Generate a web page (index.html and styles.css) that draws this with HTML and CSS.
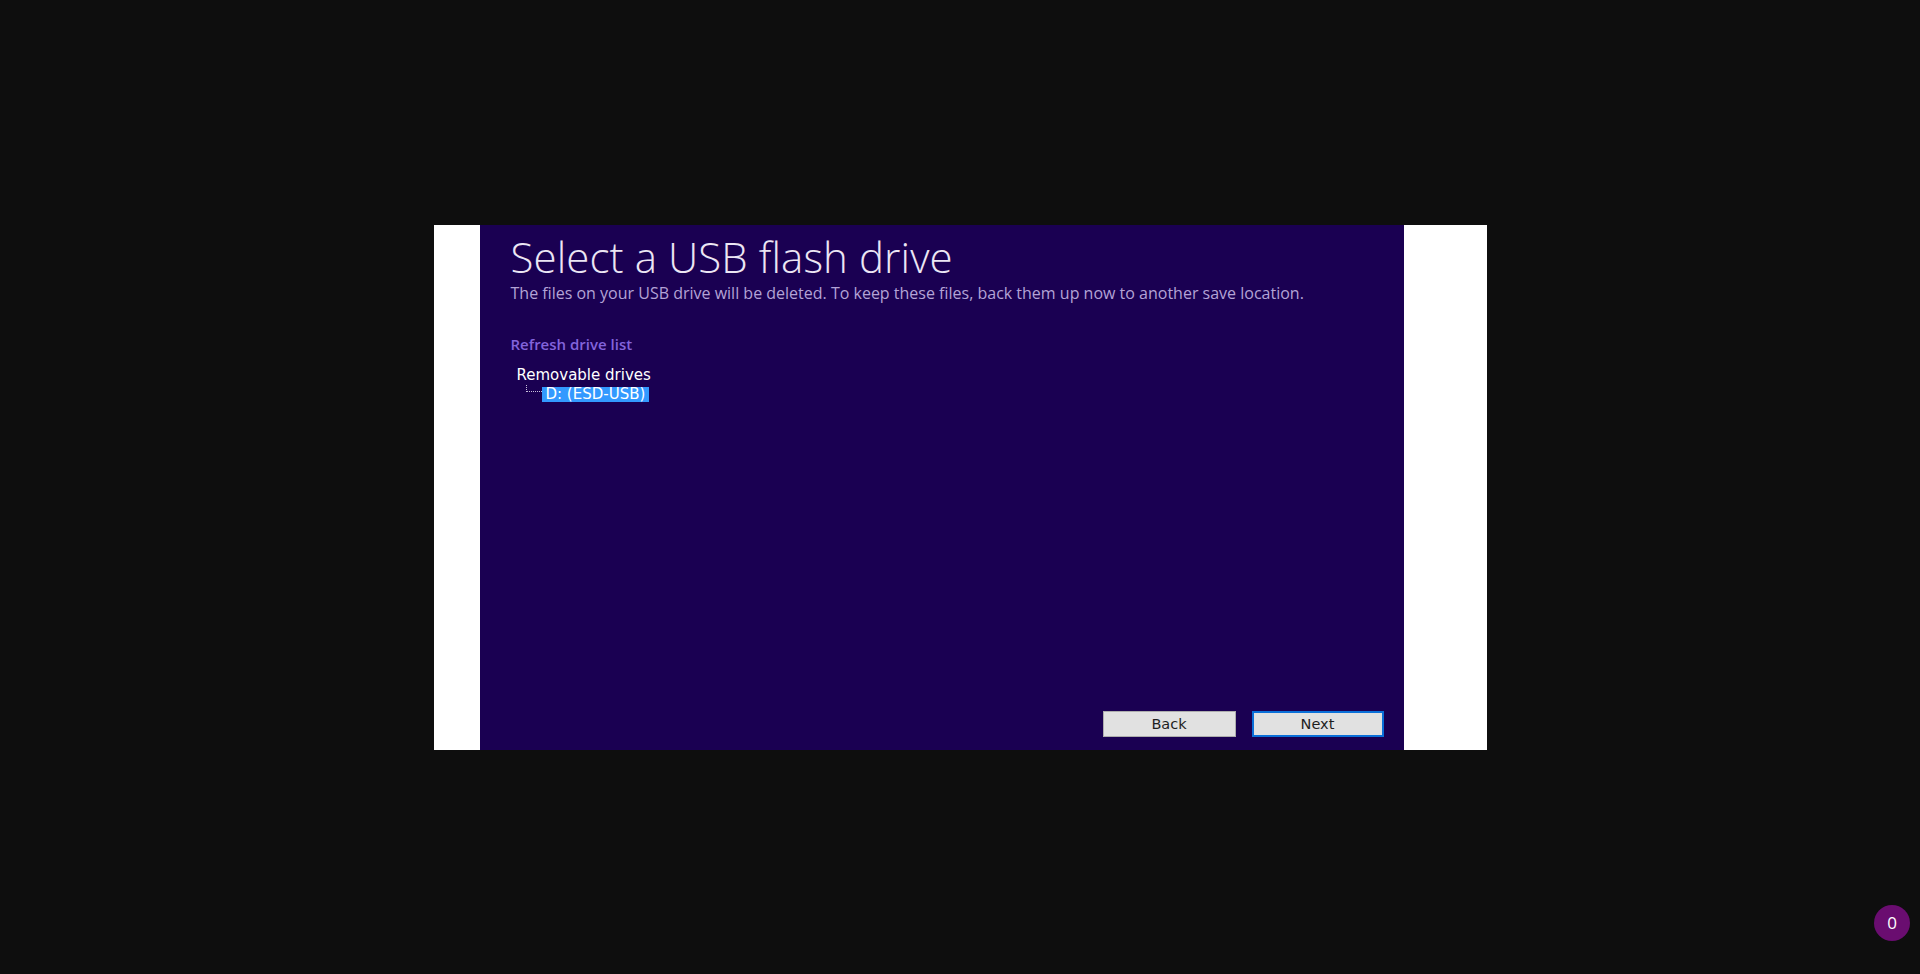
FILE: index.html
```html
<!DOCTYPE html>
<html lang="en">
<head>
<meta charset="utf-8">
<title>Select a USB flash drive</title>
<link rel="stylesheet" href="styles.css">
</head>
<body>
<div class="stage">
  <div class="frame">
    <div class="panel">
      <h1 class="title">Select a USB flash drive</h1>
      <p class="subtitle">The files on your USB drive will be deleted. To keep these files, back them up now to another save location.</p>
      <a class="refresh">Refresh drive list</a>
      <div class="tree">
        <div class="tree-root">Removable drives</div>
        <div class="tree-item">
          <span class="tree-line"></span>
          <span class="tree-label">D: (ESD-USB)</span>
        </div>
      </div>
      <div class="actions">
        <button class="btn">Back</button>
        <button class="btn btn-default">Next</button>
      </div>
    </div>
  </div>
</div>
<div class="badge">0</div>
</body>
</html>
```
FILE: styles.css
```css
html, body {
  margin: 0;
  padding: 0;
  height: 100%;
}
body {
  background: #0e0e0e;
  font-family: "Open Sans", "Noto Sans", sans-serif;
}
.stage {
  height: 100%;
  display: flex;
  align-items: center;
  justify-content: center;
}
.frame {
  width: 1053px;
  height: 525px;
  background: #ffffff;
  display: flex;
  padding-left: 46px;
  box-sizing: border-box;
}
.panel {
  width: 924px;
  height: 100%;
  background: #1a0052;
  display: flex;
  flex-direction: column;
  padding: 0 20px 13px 31px;
  box-sizing: border-box;
}
.title {
  margin: 8px 0 0 0;
  font-weight: 300;
  font-size: 42px;
  line-height: 48px;
  color: #ece6f4;
  letter-spacing: 0.1px;
}
.subtitle {
  margin: 1px 0 0 0;
  font-size: 16px;
  line-height: 22px;
  font-weight: 500;
  color: #b3a3d6;
}
.refresh {
  margin-top: 30px;
  font-size: 15px;
  line-height: 20px;
  color: #8364dc;
  font-weight: 600;
}
.tree {
  margin-top: 12px;
  padding-left: 6px;
  font-family: "DejaVu Sans", Verdana, sans-serif;
  font-size: 15px;
  color: #ffffff;
}
.tree-root {
  line-height: 18px;
}
.tree-item {
  display: flex;
  align-items: flex-start;
  padding-left: 9px;
  margin-top: 3px;
}
.tree-line {
  width: 16px;
  height: 7px;
  margin-top: -2px;
  border-left: 1px dotted #c8c0dc;
  border-bottom: 1px dotted #c8c0dc;
  box-sizing: border-box;
}
.tree-label {
  background: #3399ff;
  line-height: 15px;
  padding: 0 4px;
}
.actions {
  margin-top: auto;
  display: flex;
  justify-content: flex-end;
  gap: 16px;
}
.btn {
  width: 133px;
  height: 26px;
  background: #e1e1e1;
  border: 1px solid #adadad;
  font-family: "DejaVu Sans", Verdana, sans-serif;
  font-size: 14.5px;
  color: #1e1e1e;
  padding: 0;
}
.btn-default {
  width: 132px;
  border: 2px solid #0a6fd8;
}
.badge {
  position: fixed;
  right: 10px;
  bottom: 33px;
  width: 36px;
  height: 36px;
  border-radius: 50%;
  background: #6a0d70;
  color: #ffffff;
  font-family: "Open Sans", sans-serif;
  font-size: 17px;
  line-height: 36px;
  text-align: center;
}
```
